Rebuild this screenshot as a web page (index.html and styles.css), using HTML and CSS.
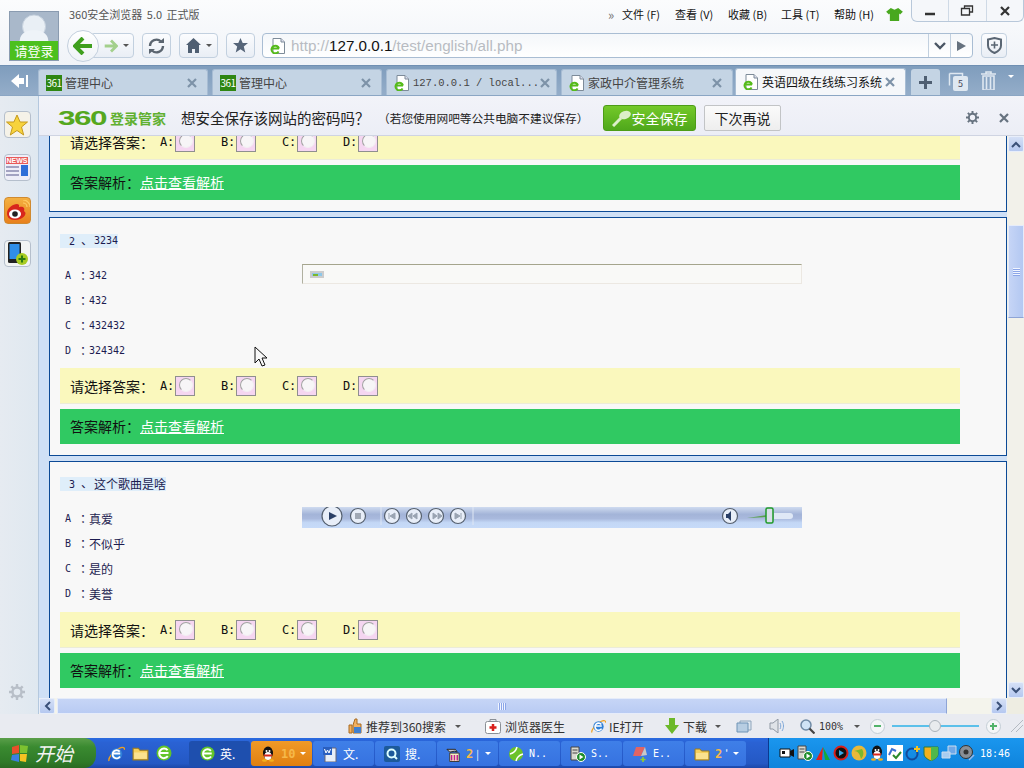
FILE: index.html
```html
<!DOCTYPE html>
<html lang="zh">
<head>
<meta charset="utf-8">
<title>英语四级在线练习系统</title>
<link rel="stylesheet" href="styles.css">
</head>
<body>
<svg class="defs" width="0" height="0" aria-hidden="true">
  <defs>
    <symbol id="page-e" viewBox="0 0 16 16"><path d="M3 .5h8l3.500 3.500v11.500h-11.500z" fill="#fff" stroke="#7d8b99"/><path d="M11 .5v3.500h3.500" fill="#dde" stroke="#7d8b99"/><path d="M2 10.500h7M8.600 13.400a3.800 3.800 0 1 1 .4-2.900" fill="none" stroke="#55bb1a" stroke-width="2"/></symbol>
    <symbol id="x" viewBox="0 0 12 12"><path d="M2 2l8 8M10 2l-8 8" fill="none" stroke="currentColor" stroke-width="2.200"/></symbol>
    <symbol id="ie" viewBox="0 0 16 16"><path d="M1 15c-1-2 3-9 10-12 3-1.500 5-.5 4.500 1.500" fill="none" stroke="#f0a020" stroke-width="1.300"/><circle cx="8" cy="8.500" r="5.500" fill="#2f80d8"/><path d="M4.500 8h7M11 6.300a3.800 3.800 0 1 0 .3 4.500" fill="none" stroke="#fff" stroke-width="1.700"/></symbol>
    <symbol id="green-e" viewBox="0 0 16 16"><circle cx="8" cy="8" r="7.500" fill="#62c52a"/><path d="M3.500 8h9M11.600 5.200a4.800 4.800 0 1 0 .2 6" fill="none" stroke="#fff" stroke-width="2"/></symbol>
    <symbol id="folder" viewBox="0 0 16 16"><path d="M1 3h5l1.500 2h7.500v9h-14z" fill="#f6d05c" stroke="#9a7a20"/><path d="M2 7h12v6h-12z" fill="#fbe28f"/></symbol>
    <symbol id="penguin" viewBox="0 0 16 16"><ellipse cx="8" cy="7" rx="5" ry="6.500" fill="#111"/><ellipse cx="8" cy="10" rx="3.500" ry="4" fill="#fff"/><path d="M3.500 8.500h9l-1 2h-7z" fill="#d8261c"/><ellipse cx="4.500" cy="14.500" rx="2.500" ry="1.200" fill="#f2b01e"/><ellipse cx="11.500" cy="14.500" rx="2.500" ry="1.200" fill="#f2b01e"/><circle cx="6.500" cy="5" r="1" fill="#fff"/><circle cx="9.500" cy="5" r="1" fill="#fff"/></symbol>
    <symbol id="server" viewBox="0 0 16 16"><path d="M1 1h8v13h-8z" fill="#d8d8d0" stroke="#444"/><path d="M2.500 4h5M2.500 7h5" stroke="#444"/><circle cx="11" cy="11" r="4.500" fill="#1d8c2a" stroke="#fff"/><path d="M9.500 8.500l4 2.500-4 2.500z" fill="#fff"/></symbol>
    <symbol id="gear" viewBox="0 0 16 16"><circle cx="8" cy="8" r="4.500" fill="none" stroke="currentColor" stroke-width="2.400"/><path d="M8 0v3M8 13v3M0 8h3M13 8h3M2.300 2.300l2.100 2.100M11.600 11.600l2.100 2.100M13.700 2.300l-2.100 2.100M4.400 11.600l-2.100 2.100" stroke="currentColor" stroke-width="2.400"/></symbol>
  </defs>
</svg>

<header class="chrome">
  <div class="avatar">
    <svg class="avatar-pic" viewBox="0 0 50 30"><circle cx="25" cy="15" r="12" fill="#e9eff5" stroke="#c4d0dc"/><path d="M10 30c1-9 8-11 15-11s14 2 15 11z" fill="#eef3f8"/></svg>
    <span class="avatar-label">请登录</span>
  </div>
  <div class="chrome-main">
    <div class="title-row">
      <span class="app-title">360安全浏览器 5.0 正式版</span>
      <nav class="menu">
        <span class="menu-more">»</span>
        <span class="menu-item">文件 (F)</span>
        <span class="menu-item">查看 (V)</span>
        <span class="menu-item">收藏 (B)</span>
        <span class="menu-item">工具 (T)</span>
        <span class="menu-item">帮助 (H)</span>
        <svg class="shirt" viewBox="0 0 18 14"><path d="M5 0l4 2 4-2 5 4-3 3-1-1v8h-10v-8l-1 1-3-3z" fill="#48a81e"/></svg>
      </nav>
      <div class="win-controls">
        <span class="win-btn"><svg width="12" height="12" viewBox="0 0 12 12"><path d="M1 9h10" stroke="#333" stroke-width="2.500"/></svg></span>
        <span class="win-btn"><svg width="14" height="12" viewBox="0 0 14 12"><path d="M4.500 3v-2h8v6h-3M1.500 3.500h8v6.500h-8z" fill="none" stroke="#333" stroke-width="1.300"/></svg></span>
        <span class="win-btn win-close"><svg width="12" height="12"><use href="#x"/></svg></span>
      </div>
    </div>
    <div class="nav-row">
      <span class="back"><svg width="20" height="18" viewBox="0 0 20 18"><path d="M10 1l-8 8 8 8M3 9h16" fill="none" stroke="#3f9f1e" stroke-width="4"/></svg></span>
      <span class="tool forward"><svg width="14" height="14" viewBox="0 0 20 18"><path d="M10 1l8 8-8 8M17 9h-16" fill="none" stroke="#a3d08c" stroke-width="4"/></svg><i class="caret"></i></span>
      <span class="tool refresh"><svg width="19" height="16" viewBox="0 0 19 16"><path d="M3 8a6.500 6.500 0 0 1 11-4.500M16 8a6.500 6.500 0 0 1-11 4.500" fill="none" stroke="#5b6570" stroke-width="2.400"/><path d="M11 5h6v-5zM8 11h-6v5z" fill="#5b6570"/></svg></span>
      <span class="tool home"><svg width="15" height="15" viewBox="0 0 15 15"><path d="M7.500 0l7.500 7h-2v8h-4v-4h-3v4h-4v-8h-2z" fill="#4f5f72"/></svg><i class="caret"></i></span>
      <span class="tool fav"><svg width="15" height="15" viewBox="0 0 15 15"><path d="M7.500 0l2.200 5h5.300l-4.200 3.500 1.500 6-4.800-3.200-4.800 3.200 1.500-6-4.200-3.500h5.300z" fill="#566579"/></svg></span>
      <div class="address">
        <svg class="addr-icon" width="16" height="16"><use href="#page-e"/></svg>
        <span class="url">http://<b>127.0.0.1</b>/test/english/all.php</span>
        <span class="addr-btn"><svg width="12" height="8" viewBox="0 0 12 8"><path d="M1 1l5 5 5-5" fill="none" stroke="#4a5664" stroke-width="2.400"/></svg></span>
        <span class="addr-btn addr-go"><svg width="9" height="10" viewBox="0 0 9 10"><path d="M0 0l9 5-9 5z" fill="#66727f"/></svg></span>
      </div>
      <span class="tool shield"><svg width="15" height="17" viewBox="0 0 15 17"><path d="M1 2.500l6.500-1.500 6.500 1.500v6c0 3.500-3 6-6.500 7.500-3.500-1.500-6.500-4-6.500-7.500z" fill="none" stroke="#5a6673" stroke-width="2"/><path d="M4 8h7M7.500 4.500v7" stroke="#5a6673" stroke-width="1.600"/></svg></span>
    </div>
  </div>
</header>

<div class="tabstrip">
  <span class="side-toggle"><svg width="17" height="14" viewBox="0 0 17 14"><path d="M8 0v4h5v6h-5v4l-8-7z" fill="#fff"/><path d="M15 1h2v12h-2z" fill="#fff"/></svg></span>
  <div class="tab"><span class="badge-361">361</span><span class="tab-text">管理中心</span><svg class="tab-x"><use href="#x"/></svg></div>
  <div class="tab"><span class="badge-361">361</span><span class="tab-text">管理中心</span><svg class="tab-x"><use href="#x"/></svg></div>
  <div class="tab tab-w3"><svg class="tab-ico"><use href="#page-e"/></svg><span class="tab-text tab-mono">127.0.0.1 / local...</span><svg class="tab-x"><use href="#x"/></svg></div>
  <div class="tab tab-w4"><svg class="tab-ico"><use href="#page-e"/></svg><span class="tab-text">家政中介管理系统</span><svg class="tab-x"><use href="#x"/></svg></div>
  <div class="tab tab-active"><svg class="tab-ico"><use href="#page-e"/></svg><span class="tab-text">英语四级在线练习系统</span><svg class="tab-x"><use href="#x"/></svg></div>
  <span class="tab-new"><svg width="15" height="15" viewBox="0 0 15 15"><path d="M7.500 1v13M1 7.500h13" stroke="#4f5f72" stroke-width="3"/></svg></span>
  <span class="tab-count"><svg width="20" height="20" viewBox="0 0 20 20"><path d="M1.500 2.500h13v3" fill="none" stroke="#dfe8f1" stroke-width="1.500"/><path d="M1.500 2.500v12" stroke="#dfe8f1" stroke-width="1.500"/></svg><span class="tab-count-num">5</span></span>
  <span class="tab-trash"><svg width="15" height="19" viewBox="0 0 15 19"><path d="M0 3h15M5 3v-2h5v2" fill="none" stroke="#dfe8f1" stroke-width="1.600"/><path d="M2 5h11v14h-11zM5.500 6v12M9.500 6v12" fill="none" stroke="#dfe8f1" stroke-width="1.600"/></svg></span>
  <i class="caret caret-trash"></i>
</div>

<div class="workspace">
  <aside class="sidebar">
    <span class="app app-star"><svg width="22" height="22" viewBox="0 0 22 22"><path d="M11 1l3.100 7h7.400l-6 5 2.200 8-6.700-4.500-6.700 4.500 2.200-8-6-5h7.400z" fill="#f7d33c" stroke="#c59a1e"/></svg></span>
    <span class="app app-news"><span class="news-tag">NEWS</span><svg width="24" height="13" viewBox="0 0 24 13"><path d="M1 2h13M1 6h13M1 10h13" stroke="#8a8ab0" stroke-width="1.300"/><path d="M16 0h7v11h-7z" fill="#2f6fd8"/></svg></span>
    <span class="app app-weibo"><svg width="25" height="22" viewBox="0 0 25 22"><path d="M2 13c0-5 6-9 10-9 3 0 2 3 2 3s4-1 5 1-1 3 1 4c2 2-2 8-10 8-6 0-8-3-8-7z" fill="#d8261c"/><ellipse cx="10" cy="14" rx="6" ry="4.500" fill="#fff"/><circle cx="10" cy="14" r="2.800" fill="#222"/><path d="M18 3a4 4 0 0 1 4 4M18 0a7 7 0 0 1 7 7" fill="none" stroke="#ffcc66" stroke-width="1.200"/></svg></span>
    <span class="app app-phone"><svg width="24" height="24" viewBox="0 0 24 24"><rect x="3" y="0" width="13" height="21" rx="1.500" fill="#222"/><rect x="4.500" y="2" width="10" height="15" fill="#2f8ee8"/><circle cx="17" cy="17" r="6" fill="#a8cc22"/><path d="M17 13.500v7M13.500 17h7" stroke="#2a7a10" stroke-width="2"/></svg></span>
    <svg class="side-gear"><use href="#gear"/></svg>
  </aside>

  <div class="page-col">
    <div class="savebar">
      <span class="logo-360">360</span>
      <span class="logo-name">登录管家</span>
      <span class="save-q">想安全保存该网站的密码吗？</span>
      <span class="save-note">（若您使用网吧等公共电脑不建议保存）</span>
      <button class="btn-save"><svg width="20" height="18" viewBox="0 0 20 18"><path d="M1 17l8-8" stroke="#dcefc9" stroke-width="3"/><ellipse cx="13" cy="6" rx="6" ry="4" fill="#dcefc9" transform="rotate(-20 13 6)"/></svg>安全保存</button>
      <button class="btn-later">下次再说</button>
      <svg class="save-gear"><use href="#gear"/></svg>
      <svg class="save-x"><use href="#x"/></svg>
    </div>

    <div class="viewport">
      <div class="page">
        <section class="card card-cut">
          <div class="answer-bar">
            <span class="answer-lead">请选择答案：</span>
            <span class="choice">A:<i class="radio"></i></span>
            <span class="choice">B:<i class="radio"></i></span>
            <span class="choice">C:<i class="radio"></i></span>
            <span class="choice">D:<i class="radio"></i></span>
          </div>
          <div class="analysis-bar">答案解析：<a class="analysis-link">点击查看解析</a></div>
        </section>

        <section class="card">
          <div class="question"><span class="q-num">2 <span class="q-sep">、</span></span><span class="q-text">3234</span></div>
          <div class="body-row">
            <ul class="options">
              <li><span class="opt-key">A</span><span class="opt-colon">：</span><span class="opt-val">342</span></li>
              <li><span class="opt-key">B</span><span class="opt-colon">：</span><span class="opt-val">432</span></li>
              <li><span class="opt-key">C</span><span class="opt-colon">：</span><span class="opt-val">432432</span></li>
              <li><span class="opt-key">D</span><span class="opt-colon">：</span><span class="opt-val">324342</span></li>
            </ul>
            <div class="img-box"><svg width="14" height="7" viewBox="0 0 14 7"><rect width="14" height="7" fill="#ccc"/><rect x="2" y="2" width="10" height="3" fill="#8ec7e8"/><rect x="3" y="3" width="5" height="2" fill="#7cb82a"/></svg></div>
          </div>
          <div class="answer-bar">
            <span class="answer-lead">请选择答案：</span>
            <span class="choice">A:<i class="radio"></i></span>
            <span class="choice">B:<i class="radio"></i></span>
            <span class="choice">C:<i class="radio"></i></span>
            <span class="choice">D:<i class="radio"></i></span>
          </div>
          <div class="analysis-bar">答案解析：<a class="analysis-link">点击查看解析</a></div>
        </section>

        <section class="card card-last">
          <div class="question"><span class="q-num">3 <span class="q-sep">、</span></span><span class="q-text q-cjk">这个歌曲是啥</span></div>
          <div class="body-row">
            <ul class="options">
              <li><span class="opt-key">A</span><span class="opt-colon">：</span><span class="opt-cjk">真爱</span></li>
              <li><span class="opt-key">B</span><span class="opt-colon">：</span><span class="opt-cjk">不似乎</span></li>
              <li><span class="opt-key">C</span><span class="opt-colon">：</span><span class="opt-cjk">是的</span></li>
              <li><span class="opt-key">D</span><span class="opt-colon">：</span><span class="opt-cjk">美誉</span></li>
            </ul>
            <div class="player">
              <svg width="500" height="21" viewBox="0 0 500 21">
                <g fill="#e8eef8" stroke="#55606f" stroke-width="1.200">
                  <circle cx="30" cy="9" r="10"/><circle cx="56" cy="9" r="7.500"/><circle cx="90" cy="9" r="7.500"/><circle cx="112" cy="9" r="7.500"/><circle cx="134" cy="9" r="7.500"/><circle cx="156" cy="9" r="7.500"/><circle cx="428" cy="9" r="7.500"/>
                </g>
                <path d="M27 5l8 4-8 4z" fill="#2a3f66"/>
                <path d="M53 6h6v6h-6z" fill="#a0a8b4"/>
                <path d="M87 6v6M93 6l-5 3 5 3zM115 6l-4 3 4 3zM110 6l-4 3 4 3zM131 6l4 3-4 3zM136 6l4 3-4 3zM153 6l5 3-5 3zM159 6v6" fill="#9aa4b2" stroke="#9aa4b2"/>
                <path d="M424 7h2l3-3v10l-3-3h-2z" fill="#2a3f66"/>
                <path d="M79 0v18M171 0v18" stroke="#dfe7f4"/>
                <path d="M445 11l20-3v2z" fill="#5aa050"/>
                <path d="M472 6h16a3 3 0 0 1 0 6h-16z" fill="#dfe8f6"/>
                <rect x="464" y="1" width="7" height="15" rx="1.500" fill="#d9e0ea" stroke="#1f9a2a" stroke-width="1.500"/>
              </svg>
            </div>
          </div>
          <div class="answer-bar">
            <span class="answer-lead">请选择答案：</span>
            <span class="choice">A:<i class="radio"></i></span>
            <span class="choice">B:<i class="radio"></i></span>
            <span class="choice">C:<i class="radio"></i></span>
            <span class="choice">D:<i class="radio"></i></span>
          </div>
          <div class="analysis-bar">答案解析：<a class="analysis-link">点击查看解析</a></div>
        </section>
      </div>
      <div class="vscroll">
        <span class="sb-btn"><svg width="10" height="7" viewBox="0 0 10 7"><path d="M1 6l4-4 4 4" fill="none" stroke="#3a5078" stroke-width="2"/></svg></span>
        <span class="v-thumb"><i class="grip-h"></i></span>
        <span class="v-rest"></span>
        <span class="sb-btn"><svg width="10" height="7" viewBox="0 0 10 7"><path d="M1 1l4 4 4-4" fill="none" stroke="#3a5078" stroke-width="2"/></svg></span>
      </div>
    </div>

    <div class="hscroll">
      <span class="sb-btn"><svg width="7" height="10" viewBox="0 0 7 10"><path d="M6 1l-4 4 4 4" fill="none" stroke="#3a5078" stroke-width="2"/></svg></span>
      <span class="h-thumb"><i class="grip-v"></i></span>
      <span class="h-rest"></span>
      <span class="sb-btn"><svg width="7" height="10" viewBox="0 0 7 10"><path d="M1 1l4 4-4 4" fill="none" stroke="#3a5078" stroke-width="2"/></svg></span>
      <span class="sb-corner"></span>
    </div>
  </div>
</div>

<footer class="statusbar">
  <span class="st st-rec"><svg width="14" height="16" viewBox="0 0 14 16"><path d="M1 7h3v8h-3zM5 7l2-6h2v5h4v9h-8z" fill="#f2b060" stroke="#a86a20"/><path d="M6 9h7v6h-7z" fill="#3f7fd0"/></svg><span>推荐到360搜索</span></span>
  <i class="caret st-caret-1"></i>
  <span class="st st-doc"><svg width="16" height="15" viewBox="0 0 16 15"><rect x=".5" y="2.500" width="15" height="12" rx="2" fill="#fff" stroke="#8a8f96"/><path d="M5 2.500v-2h6v2" fill="none" stroke="#8a8f96"/><path d="M8 5v7M4.500 8.500h7" stroke="#d8201c" stroke-width="2.500"/></svg><span>浏览器医生</span></span>
  <span class="st st-ie"><svg width="15" height="16"><use href="#ie"/></svg><span>IE打开</span></span>
  <span class="st st-dl"><svg width="14" height="16" viewBox="0 0 14 16"><path d="M4 0h6v7h4l-7 9-7-9h4z" fill="#6cb82a"/></svg><span>下载</span></span>
  <i class="caret st-caret-2"></i>
  <svg class="st-win" width="16" height="14" viewBox="0 0 16 14"><path d="M4 2h11v9h-11z" fill="#dbe5ef" stroke="#8fa5bb"/><path d="M1 4h11v9h-11z" fill="#b7cde2" stroke="#6f93b5"/></svg>
  <svg class="st-vol" width="16" height="14" viewBox="0 0 16 14"><path d="M1 4h3l5-4v14l-5-4h-3z" fill="#dfe3e8" stroke="#8f98a3"/><path d="M11 4c1 2 1 4 0 6M13 2c2 3 2 7 0 10" fill="none" stroke="#7fa8d8"/></svg>
  <svg class="st-zoom" width="15" height="15" viewBox="0 0 15 15"><circle cx="6" cy="6" r="5" fill="#cfe3f5" stroke="#6f8aa5" stroke-width="1.500"/><path d="M9.500 9.500l5 5" stroke="#444" stroke-width="2.200"/></svg>
  <span class="st-pct">100%</span>
  <i class="caret st-caret-3"></i>
  <span class="zoom-btn zoom-minus"><i class="zoom-h"></i></span>
  <span class="slider"><i class="slider-thumb"></i></span>
  <span class="zoom-btn zoom-plus"><i class="zoom-h"></i><i class="zoom-v"></i></span>
  <svg class="st-grip" width="14" height="14" viewBox="0 0 14 14"><path d="M1 13l12-12M6 13l7-7" stroke="#b4bac2"/></svg>
</footer>

<div class="taskbar">
  <span class="start">
    <svg width="18" height="17" viewBox="0 0 18 17"><path d="M1 2l7-2v8l-7 1z" fill="#e8502a"/><path d="M9 0l8 1-1 7-7 0z" fill="#7cc230"/><path d="M1 10l7-1v8l-8-2z" fill="#3a80e0"/><path d="M9 9h7l-1 8-6-1z" fill="#f6c322"/></svg>
    <span class="start-text">开始</span>
  </span>
  <span class="quick">
    <svg width="17" height="17"><use href="#ie"/></svg>
    <svg width="17" height="17"><use href="#folder"/></svg>
    <svg width="16" height="16"><use href="#green-e"/></svg>
  </span>
  <div class="task-list">
    <span class="task task-on"><svg width="15" height="15"><use href="#green-e"/></svg><span>英.</span></span>
    <span class="task task-alert"><svg width="16" height="16"><use href="#penguin"/></svg><span class="task-num">10</span><i class="caret caret-white"></i></span>
    <span class="task"><svg width="16" height="16" viewBox="0 0 16 16"><path d="M3 2h11v14h-11z" fill="#e8eef8" stroke="#667"/><path d="M1 1h9v8h-9z" fill="#2a5fbf"/><path d="M2.500 3l1.500 4 1.500-3 1.500 3 1.500-4" fill="none" stroke="#fff"/></svg><span>文.</span></span>
    <span class="task"><svg width="16" height="16" viewBox="0 0 16 16"><rect width="16" height="16" rx="2" fill="#1c5a9a"/><circle cx="7.500" cy="7.500" r="4" fill="none" stroke="#dff" stroke-width="2"/><path d="M10 10l3 3" stroke="#dff" stroke-width="2"/></svg><span>搜.</span></span>
    <span class="task"><svg width="15" height="16" viewBox="0 0 16 16"><path d="M4 7h10v9h-10z" fill="#f6f0c0" stroke="#333"/><path d="M6 9v6M9 9v6M12 9v6" stroke="#c02090" stroke-width="1.600"/><path d="M1 3h9l2 3-3-1-5 1z" fill="#ccc" stroke="#222"/></svg><span class="task-num">2</span><span class="task-bar">|</span><i class="caret caret-white"></i></span>
    <span class="task"><svg width="16" height="16" viewBox="0 0 16 16"><circle cx="8" cy="8" r="7" fill="#6cc22a"/><path d="M2 8c4-1 6-3 7-7M8 15c1-4 3-6 7-7" stroke="#fff" stroke-width="1.500" fill="none"/></svg><span class="task-mono">N..</span></span>
    <span class="task"><svg width="16" height="16"><use href="#server"/></svg><span class="task-mono">S..</span></span>
    <span class="task"><svg width="16" height="16" viewBox="0 0 16 16"><path d="M4 1h9l-4 9h-8z" fill="#e06464"/><path d="M9 10l4-9 2 8z" fill="#c8c8c8"/><path d="M11 11v5M8.500 13.500h5" stroke="#8fd030" stroke-width="1.600"/></svg><span class="task-mono">E..</span></span>
    <span class="task"><svg width="16" height="16"><use href="#folder"/></svg><span class="task-num">2</span><span class="task-bar">'</span><i class="caret caret-white"></i></span>
  </div>
  <div class="tray">
    <svg width="16" height="16" viewBox="0 0 16 16"><path d="M1 4h10v8h-10z" fill="#fff" stroke="#111"/><path d="M11 6l4-2v8l-4-2z" fill="#111"/><path d="M3 6h3v3h-3z" fill="#111"/></svg>
    <svg width="16" height="16"><use href="#server"/></svg>
    <svg width="16" height="16" viewBox="0 0 16 16"><path d="M8 2l-7 13h6z" fill="#e0201c"/><path d="M8 2l7 13h-5z" fill="#14a838"/></svg>
    <svg width="16" height="16" viewBox="0 0 16 16"><circle cx="8" cy="8" r="6.500" fill="#111" stroke="#d8201c" stroke-width="2"/><path d="M6 5l5 3-5 3z" fill="#38a8e8"/></svg>
    <svg width="16" height="16" viewBox="0 0 16 16"><circle cx="8" cy="8" r="7.500" fill="#e8b83a"/><path d="M3 6c4 0 6 3 7 8 3-3 3-7 1-10z" fill="#7cb82a"/></svg>
    <svg width="16" height="16"><use href="#penguin"/></svg>
    <svg width="16" height="16" viewBox="0 0 16 16"><rect width="16" height="16" fill="#fff"/><path d="M2 10l3-6 4 2" fill="none" stroke="#3a70d0" stroke-width="2"/><path d="M6 10l3 3 5-6" fill="none" stroke="#2a8a2a" stroke-width="2"/></svg>
    <svg width="16" height="16" viewBox="0 0 16 16"><circle cx="7" cy="9" r="5.500" fill="none" stroke="#134a9a" stroke-width="2"/><path d="M12 1v6M9 4h6" stroke="#f6c322" stroke-width="2"/></svg>
    <svg width="16" height="16" viewBox="0 0 16 16"><path d="M1 2h14v7c0 3-3 5-7 7-4-2-7-4-7-7z" fill="#f2b01e" stroke="#2a7a3a"/><path d="M8 2h7v7c0 3-3 5-7 7z" fill="#4fb84a"/></svg>
    <svg width="16" height="16" viewBox="0 0 16 16"><path d="M7 1h8v8h-8z" fill="#6fa8e8" stroke="#cde"/><path d="M1 7h8v6h-8z" fill="#a8cdf0" stroke="#cde"/></svg>
    <svg width="16" height="16" viewBox="0 0 16 16"><circle cx="7" cy="7" r="6.500" fill="#8a8f96" stroke="#333"/><circle cx="7" cy="7" r="2.500" fill="#333"/><path d="M10 15l5-5" stroke="#9ab8e8" stroke-width="1.500"/></svg>
    <span class="clock">18:46</span>
  </div>
</div>

<svg class="cursor" width="13" height="21" viewBox="0 0 13 21"><path d="M1 1v16l4-4 3 7 3-1-3-7h5z" fill="#f8f8f8" stroke="#111"/></svg>
</body>
</html>
```
FILE: styles.css
```css
* { box-sizing: border-box; }
html, body { margin: 0; padding: 0; }
body {
  width: 1024px;
  height: 768px;
  overflow: hidden;
  position: relative;
  display: flex;
  flex-direction: column;
  font-family: "Noto Sans CJK SC", "Noto Sans", sans-serif;
  font-size: 12px;
  color: #222;
  background: #eef0f6;
}
.defs { position: absolute; }
ul { list-style: none; margin: 0; padding: 0; }
svg { display: block; flex: none; }
i { display: block; flex: none; }

/* ---- top chrome ---- */
.chrome {
  height: 65px;
  flex: none;
  display: flex;
  background: linear-gradient(#fbfcfd, #f0f3f8);
}
.avatar {
  width: 50px;
  height: 50px;
  margin: 11px 0 0 9px;
  flex: none;
  border: 1px solid #8a9bb0;
  background: #a9b8ca;
  display: flex;
  flex-direction: column;
  justify-content: space-between;
}
.avatar-pic { width: 48px; height: 29px; }
.avatar-label {
  height: 19px;
  background: #4cc01e;
  color: #fff;
  font-size: 13px;
  line-height: 19px;
  text-align: center;
}
.chrome-main { flex: 1; min-width: 0; display: flex; flex-direction: column; }
.title-row { height: 33px; display: flex; align-items: flex-start; }
.app-title {
  margin: 6px 0 0 10px;
  font-size: 11px;
  line-height: 16px;
  color: #555;
  word-spacing: 2px;
}
.menu {
  margin-left: auto;
  margin-top: 6px;
  display: flex;
  align-items: center;
  height: 17px;
}
.menu-more { color: #777; font-size: 13px; width: 14px; line-height: 17px; }
.menu-item { width: 53px; font-size: 11px; line-height: 17px; color: #111; white-space: nowrap; }
.shirt { width: 17px; height: 13px; margin: 0 8px 0 -1px; }
.win-controls {
  width: 113px;
  height: 22px;
  display: flex;
  border: 1px solid #b8c8da;
  border-top: 0;
  border-radius: 0 0 6px 6px;
  background: #f5f7fa;
}
.win-btn {
  flex: 1;
  display: flex;
  align-items: center;
  justify-content: center;
  color: #333;
  border-right: 1px solid #cfdae6;
}
.win-close { border-right: 0; }
.win-close svg { width: 12px; height: 12px; }
.nav-row { height: 25px; display: flex; align-items: center; margin-left: 8px; }
.back {
  width: 32px;
  height: 32px;
  flex: none;
  border-radius: 50%;
  border: 1px solid #c4d0de;
  background: linear-gradient(#fff, #eef2f7);
  display: flex;
  align-items: center;
  justify-content: center;
  position: relative;
  z-index: 1;
}
.tool {
  height: 25px;
  flex: none;
  display: flex;
  align-items: center;
  justify-content: center;
  gap: 5px;
  border: 1px solid #c2d0df;
  border-radius: 4px;
  background: linear-gradient(#fbfcfe, #e9eef5);
}
.forward { width: 44px; margin-left: -9px; padding-left: 9px; }
.refresh { width: 29px; margin-left: 8px; }
.home { width: 39px; margin-left: 8px; }
.fav { width: 29px; margin-left: 8px; }
.shield { width: 26px; margin-left: 8px; }
.caret {
  width: 0;
  height: 0;
  border-left: 3px solid transparent;
  border-right: 3px solid transparent;
  border-top: 3px solid #555;
}
.address {
  width: 711px;
  height: 25px;
  margin-left: 7px;
  flex: none;
  display: flex;
  align-items: center;
  border: 1px solid #a9bdd3;
  border-radius: 4px;
  background: linear-gradient(#f4f7fa, #fff);
}
.addr-icon { margin-left: 7px; }
.url {
  flex: 1;
  margin-left: 5px;
  font-family: "Liberation Sans", sans-serif;
  font-size: 15.200px;
  line-height: 23px;
  color: #b8bcc2;
}
.url b { color: #111; font-weight: normal; }
.addr-btn {
  width: 22px;
  height: 23px;
  display: flex;
  align-items: center;
  justify-content: center;
  border-left: 1px solid #c2d0df;
}
.addr-go { width: 22px; }

/* ---- tab strip ---- */
.tabstrip {
  height: 31px;
  flex: none;
  display: flex;
  align-items: flex-end;
  background: linear-gradient(#7f9dbd, #94adc9);
  border-top: 1px solid #6f8fb2;
  border-bottom: 1px solid #8ba6c4;
}
.side-toggle {
  width: 38px;
  height: 29px;
  flex: none;
  display: flex;
  align-items: center;
  justify-content: center;
}
.tab {
  width: 170px;
  height: 26px;
  margin-right: 4px;
  padding: 0 9px 0 7px;
  flex: none;
  display: flex;
  align-items: center;
  background: #c4d4e4;
  border: 1px solid #a8bdd4;
  border-bottom: 0;
  border-radius: 3px 3px 0 0;
}
.tab-w3 { width: 171px; }
.tab-w4 { width: 172px; margin-right: 2px; }
.tab-active { width: 171px; height: 27px; background: #f5f7fa; margin-right: 5px; }
.tab-active .tab-x { margin-left: auto; }
.badge-361 {
  width: 16px;
  height: 16px;
  flex: none;
  background: #2f8612;
  color: #fff;
  font-size: 10px;
  line-height: 16px;
  text-align: center;
  letter-spacing: -.5px;
}
.tab-ico { width: 16px; height: 16px; }
.tab-text {
  margin-left: 3px;
  flex: 1;
  font-size: 12px;
  line-height: 16px;
  white-space: nowrap;
  color: #444;
}
.tab-mono { font-family: "Liberation Mono", monospace; font-size: 10.500px; }
.tab-active .tab-text { color: #111; flex: none; margin-left: 3px; }
.tab-x { width: 12px; height: 12px; color: #7d92a8; flex: none; }
.tab-new {
  width: 29px;
  height: 26px;
  flex: none;
  display: flex;
  align-items: center;
  justify-content: center;
  background: #c4d4e4;
  border-radius: 3px 3px 0 0;
}
.tab-count {
  width: 20px;
  height: 22px;
  margin: 0 0 2px 8px;
  flex: none;
  position: relative;
}
.tab-count-num {
  position: absolute;
  left: 5px;
  top: 5px;
  width: 15px;
  height: 15px;
  background: #dfe8f1;
  border-radius: 2px;
  font-size: 9px;
  line-height: 15px;
  text-align: center;
  color: #445;
}
.tab-trash { width: 15px; height: 22px; margin: 0 0 2px 13px; flex: none; }
.caret-trash { margin: 0 0 17px 12px; border-top-color: #fff; }

/* ---- workspace ---- */
.workspace { height: 618px; flex: none; display: flex; }
.sidebar {
  width: 39px;
  flex: none;
  display: flex;
  flex-direction: column;
  align-items: center;
  padding: 15px 4px 0 0;
  border-right: 1px solid #b4c8de;
  background: linear-gradient(90deg, #e6ebf1, #dfe8f0);
}
.app {
  width: 27px;
  height: 27px;
  flex: none;
  display: flex;
  align-items: center;
  justify-content: center;
  border: 1px solid #b5bfcc;
  border-radius: 4px;
  background: #f5f2e8;
  margin-bottom: 16px;
}
.app-news { flex-direction: column; background: #eeeef8; justify-content: flex-start; padding-top: 2px; gap: 1px; }
.news-tag {
  width: 22px;
  height: 7px;
  background: #e85a5a;
  color: #fff;
  font-family: "Liberation Sans", sans-serif;
  font-size: 7px;
  line-height: 7px;
  text-align: center;
  font-weight: bold;
}
.app-weibo { background: linear-gradient(#f4b040, #e8801c); border-color: #d08a30; }
.app-phone { background: #f2f4f4; }
.side-gear { width: 16px; height: 16px; margin-top: auto; margin-bottom: 14px; color: #b8bfc8; }
.page-col { flex: 1; min-width: 0; display: flex; flex-direction: column; }

.savebar {
  height: 40px;
  flex: none;
  display: flex;
  align-items: center;
  padding: 4px 0 0 19px;
  background: linear-gradient(#f2f3f9, #eceef6);
  border-bottom: 1px solid #cfd4e2;
}
.logo-360 {
  width: 49px;
  font-family: "Liberation Sans", sans-serif;
  font-weight: bold;
  font-size: 21px;
  line-height: 24px;
  color: #55a81e;
  transform: scaleX(1.500);
  transform-origin: left center;
  letter-spacing: -1px;
}
.logo-name { margin-left: 3px; width: 71px; font-size: 14px; font-weight: bold; color: #60b030; white-space: nowrap; }
.save-q { width: 197px; font: 14.500px "Noto Sans CJK TC", sans-serif; white-space: nowrap; color: #222; }
.save-note { width: 225px; font-size: 11.700px; white-space: nowrap; color: #222; }
.btn-save {
  width: 93px;
  height: 26px;
  padding: 0;
  flex: none;
  display: flex;
  align-items: center;
  justify-content: center;
  border: 1px solid #4d9c18;
  border-radius: 3px;
  background: linear-gradient(#74c92a, #4fa81b);
  color: #fff;
  font: 14px "Noto Sans CJK SC", sans-serif;
}
.btn-later {
  width: 77px;
  height: 26px;
  margin-left: 8px;
  padding: 0;
  flex: none;
  border: 1px solid #c2c4c6;
  border-radius: 2px;
  background: linear-gradient(#fbfbfb, #eeeeee);
  color: #222;
  font: 14px "Noto Sans CJK SC", sans-serif;
}
.save-gear { width: 13px; height: 13px; margin-left: auto; color: #66727f; }
.save-x { width: 12px; height: 12px; margin: 0 14px 0 19px; color: #66727f; }

.viewport { flex: 1; min-height: 0; display: flex; }
.page {
  flex: 1;
  min-width: 0;
  overflow: hidden;
  display: flex;
  flex-direction: column;
  gap: 5px;
  padding-left: 10px;
  background: #cfe0f6;
}
.card {
  width: 958px;
  height: 239px;
  flex: none;
  padding: 16px 46px 0 10px;
  background: #f8f8f8;
  border: 1px solid #0c4a96;
}
.card-cut { height: 76px; padding-top: 0; border-top: 0; }
.card-cut .answer-bar { margin-top: -12px; line-height: 12px; }
.card-last { height: 240px; padding-top: 15px; border-bottom: 0; }
.card-last .body-row { height: 121px; }
.card-last .player { margin-top: 16px; }
.question {
  width: max-content;
  min-width: 58px;
  height: 14px;
  padding: 0 0 0 9px;
  display: flex;
  align-items: center;
  background: #dfeefa;
  color: #1c1c50;
}
.q-num { width: 25px; font: 10px/14px "DejaVu Sans Mono", monospace; white-space: pre; }
.q-sep { font: 12px/14px "Noto Sans CJK SC", sans-serif; }
.q-text { font: 10px/14px "DejaVu Sans Mono", monospace; }
.q-cjk { font: 12px/14px "Noto Sans CJK SC", sans-serif; }
.body-row { height: 120px; display: flex; }
.options { width: 242px; flex: none; padding: 15px 0 0 5px; }
.options li { height: 25px; display: flex; align-items: center; color: #1c1c50; }
.opt-key { width: 12px; font: 10px/25px "DejaVu Sans Mono", monospace; }
.opt-colon { width: 12px; font: 12px/25px "Noto Sans CJK TC", sans-serif; }
.opt-val { font: 10px/25px "DejaVu Sans Mono", monospace; }
.opt-cjk { font-size: 12px; line-height: 25px; }
.img-box {
  width: 500px;
  height: 20px;
  margin-top: 16px;
  padding: 6px 0 0 7px;
  border-top: 1px solid #a5a58d;
  border-left: 1px solid #b0b0a0;
  border-bottom: 1px solid #ece8e2;
  border-right: 1px solid #ece8e2;
  background: #f9f9f7;
}
.player {
  width: 500px;
  height: 21px;
  background: linear-gradient(#cfdbf0 0, #a3b4d8 35%, #a9b9dd 55%, #c4d8f6 75%, #c6daf8 100%);
}
.answer-bar {
  height: 36px;
  display: flex;
  align-items: center;
  padding-left: 10px;
  background: #faf8bd;
  border-bottom: 1px solid #ececd8;
  font-size: 14px;
  color: #111;
}
.answer-lead { width: 90px; white-space: nowrap; }
.choice {
  width: 61px;
  flex: none;
  display: flex;
  align-items: center;
  font: 12px "DejaVu Sans Mono", monospace;
  letter-spacing: -.2px;
}
.radio {
  width: 20px;
  height: 20px;
  margin-left: 1px;
  position: relative;
  border: 1px solid #8f8f8f;
  background: #f5d6f1;
}
.radio::after {
  content: "";
  position: absolute;
  left: 3px;
  top: 1px;
  width: 12px;
  height: 12px;
  border-radius: 50%;
  background: #f7f5f7;
  border: 1px solid #f3eef3;
  border-top-color: #a2a2a2;
  border-left-color: #a2a2a2;
}
.analysis-bar {
  height: 35px;
  margin-top: 5px;
  padding-left: 10px;
  background: #30c962;
  font-size: 14px;
  line-height: 35px;
  color: #111;
}
.analysis-link { color: #fff; text-decoration: underline; }

/* ---- scrollbars ---- */
.vscroll {
  width: 17px;
  flex: none;
  display: flex;
  flex-direction: column;
  background: #f2f1ea;
  padding-left: 1px;
}
.sb-btn {
  width: 16px;
  height: 16px;
  flex: none;
  display: flex;
  align-items: center;
  justify-content: center;
  background: linear-gradient(#d5e0f6, #b5c8f0);
  border: 1px solid #e8eefa;
  border-radius: 2px;
}
.v-thumb {
  height: 93px;
  margin-top: 73px;
  flex: none;
  display: flex;
  align-items: center;
  justify-content: center;
  background: linear-gradient(90deg, #c6d5f6, #b3c8f2);
  border: 1px solid #e6ecfa;
  border-bottom-color: #8ea4d6;
}
.grip-h { width: 7px; height: 8px; background: repeating-linear-gradient(#f0f5ff 0 1px, #8ca6e8 1px 2px); }
.v-rest { flex: 1; }
.hscroll {
  height: 16px;
  flex: none;
  display: flex;
  align-items: stretch;
  background: #f4f4ec;
}
.h-thumb {
  width: 890px;
  margin-left: 2px;
  flex: none;
  display: flex;
  align-items: center;
  justify-content: center;
  background: linear-gradient(#c6d5f6, #b9cbf3);
  border: 1px solid #e6ecfa;
  border-right-color: #8ea4d6;
}
.grip-v { width: 8px; height: 7px; background: repeating-linear-gradient(90deg, #f0f5ff 0 1px, #8ca6e8 1px 2px); }
.h-rest { flex: 1; }
.sb-corner { width: 17px; flex: none; background: #eeede2; }

/* ---- status bar ---- */
.statusbar {
  height: 24px;
  flex: none;
  display: flex;
  align-items: center;
  padding-left: 348px;
  background: #e9ebf1;
  color: #333;
  font-size: 12px;
}
.st { display: flex; align-items: center; gap: 4px; flex: none; white-space: nowrap; }
.st-rec { width: 107px; }
.st-caret-1 { margin-right: 24px; }
.st-doc { width: 106px; }
.st-ie { width: 74px; gap: 3px; }
.st-dl { width: 50px; }
.st-caret-2 { margin-right: 15px; }
.st-vol { margin-left: 17px; }
.st-zoom { margin-left: 15px; }
.st-pct { margin-left: 4px; width: 42px; font: 10px "DejaVu Sans Mono", monospace; }
.st-caret-3 { margin-right: 10px; }
.zoom-btn {
  width: 15px;
  height: 15px;
  flex: none;
  position: relative;
  border: 1px solid #c4ced6;
  border-radius: 50%;
  background: #f4f6f8;
}
.zoom-h { position: absolute; left: 3px; top: 5px; width: 7px; height: 2px; background: #52b36a; }
.zoom-v { position: absolute; left: 5px; top: 3px; width: 2px; height: 7px; background: #52b36a; }
.slider {
  width: 87px;
  height: 2px;
  margin: 0 7px;
  flex: none;
  position: relative;
  background: #5cc0ea;
}
.slider-thumb {
  position: absolute;
  left: 37px;
  top: -5px;
  width: 12px;
  height: 12px;
  border: 1px solid #a9b2ba;
  border-radius: 50%;
  background: #e8ebee;
}
.st-grip { margin-left: 9px; }

/* ---- taskbar ---- */
.taskbar {
  height: 30px;
  flex: none;
  display: flex;
  align-items: stretch;
  background: linear-gradient(#2a6ae0 0, #2a62d4 15%, #2458c4 85%, #1c47a8 100%);
}
.start {
  width: 96px;
  flex: none;
  display: flex;
  align-items: center;
  gap: 6px;
  padding-left: 11px;
  border-radius: 0 12px 12px 0;
  background: linear-gradient(#5a9f4a, #3a8a30 30%, #2f7a28 80%, #2a6a22);
}
.start-text { color: #f4f4f4; font-size: 19px; font-style: italic; line-height: 24px; }
.quick { width: 93px; flex: none; display: flex; align-items: center; gap: 7px; padding-left: 12px; }
.task-list { display: flex; gap: 1px; flex: none; width: 579px; padding-top: 3px; }
.task {
  width: 61px;
  height: 25px;
  flex: none;
  display: flex;
  align-items: center;
  gap: 5px;
  padding-left: 9px;
  border-radius: 3px;
  background: linear-gradient(#3f7fe8, #3672e0);
  color: #fff;
  font-size: 12px;
  white-space: nowrap;
}
.task-on { background: #1e4fae; padding-left: 11px; }
.task-alert { background: linear-gradient(#f09a28, #e07f10); }
.task-mono { font-family: "DejaVu Sans Mono", monospace; font-size: 10px; }
.task-num { font: bold 12px "DejaVu Sans Mono", monospace; color: #f6b84a; }
.task-bar { margin-left: -2px; font-size: 10px; }
.caret-white { border-top-color: #fff; margin-left: auto; margin-right: 7px; }
.tray {
  flex: 1;
  min-width: 0;
  display: flex;
  align-items: center;
  gap: 2px;
  padding-left: 10px;
  border-left: 1px solid #0a3a90;
  background: linear-gradient(#1a96ee, #0f84dc);
}
.clock { margin-left: 3px; color: #fff; font: 10px "DejaVu Sans Mono", monospace; }

.cursor { position: absolute; left: 254px; top: 346px; }
```
